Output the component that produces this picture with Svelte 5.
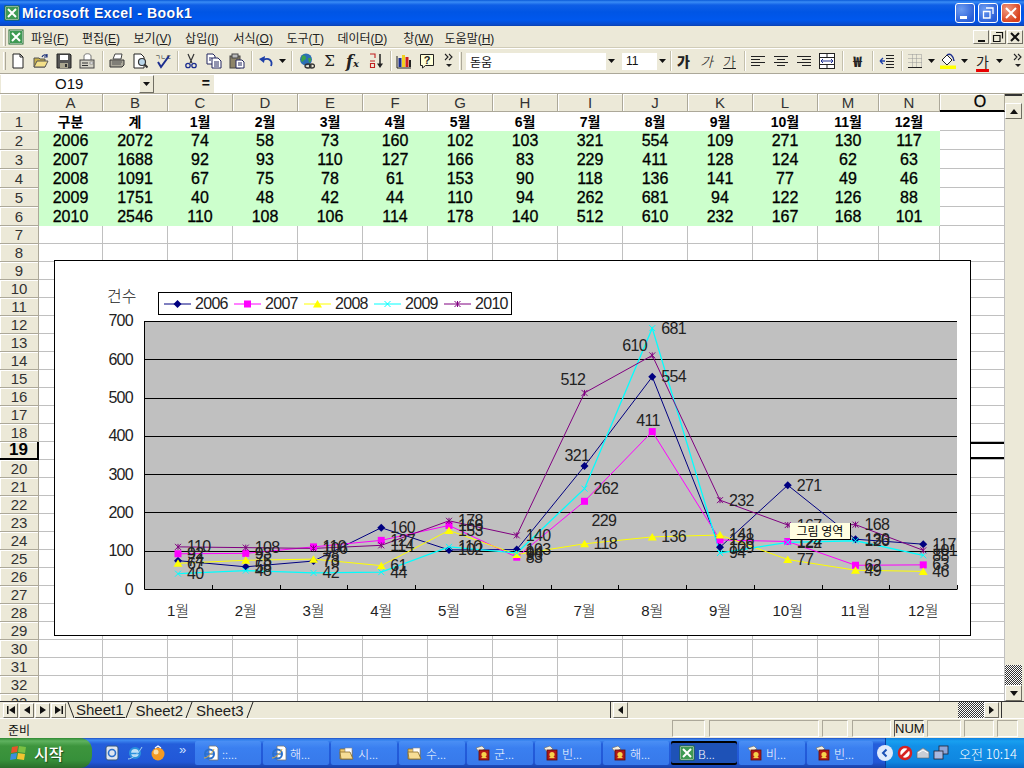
<script>
  const columns = ["A", "B", "C", "D", "E", "F", "G", "H", "I", "J", "K", "L", "M", "N", "O"];
  const months = ["1월", "2월", "3월", "4월", "5월", "6월", "7월", "8월", "9월", "10월", "11월", "12월"];

  const series = [
    { name: "2006", total: 2072, color: "#000080", mark: "diamond", values: [74, 58, 73, 160, 102, 103, 321, 554, 109, 271, 130, 117] },
    { name: "2007", total: 1688, color: "#ff00ff", mark: "square", values: [92, 93, 110, 127, 166, 83, 229, 411, 128, 124, 62, 63] },
    { name: "2008", total: 1091, color: "#ffff00", mark: "triangle", values: [67, 75, 78, 61, 153, 90, 118, 136, 141, 77, 49, 46] },
    { name: "2009", total: 1751, color: "#00ffff", mark: "cross", values: [40, 48, 42, 44, 110, 94, 262, 681, 94, 122, 126, 88] },
    { name: "2010", total: 2546, color: "#800080", mark: "star", values: [110, 108, 106, 114, 178, 140, 512, 610, 232, 167, 168, 101] },
  ];

  // labels someone dragged by hand in the chart
  const moved = {
    "2006-6": [-20, -11],
    "2007-6": [7, 19],
    "2007-7": [-16, -11],
    "2010-6": [-24, -13],
    "2010-7": [-30, -10],
  };

  const rows = [];
  for (let i = 1; i <= 33; i++) rows.push(i);

  const px = (i) => 178 + i * 67.75;
  const py = (v) => 589 - v * 0.383;
  const line = (s) => s.values.map((v, i) => `${px(i)},${py(v)}`).join(" ");
  const labelX = (s, i) => px(i) + (moved[`${s.name}-${i}`]?.[0] ?? 9);
  const labelY = (s, i) => py(s.values[i]) + (moved[`${s.name}-${i}`]?.[1] ?? 0);

  function cell(row, col) {
    if (row === 1) {
      if (col === 0) return "구분";
      if (col === 1) return "계";
      if (col < 14) return months[col - 2];
      return "";
    }
    if (row > 6 || col > 13) return "";
    const s = series[row - 2];
    if (col === 0) return s.name;
    if (col === 1) return s.total;
    return s.values[col - 2];
  }

  const tasks = [
    { icon: "ie", text: "::..." },
    { icon: "ie", text: "해..." },
    { icon: "folder", text: "시..." },
    { icon: "folder", text: "수..." },
    { icon: "hwp", text: "군..." },
    { icon: "hwp", text: "빈..." },
    { icon: "hwp", text: "해..." },
    { icon: "xl", text: "B...", active: true },
    { icon: "hwp", text: "비..." },
    { icon: "hwp", text: "빈..." },
  ];
</script>

{#snippet xlIcon()}
  <svg class="i16" viewBox="0 0 16 16">
    <rect x="1" y="1" width="14" height="14" fill="#fff" stroke="#1c6b2c" />
    <rect x="2" y="2" width="12" height="12" fill="#3e9a53" />
    <path d="M4 4l8 8M12 4l-8 8" stroke="#fff" stroke-width="2" />
  </svg>
{/snippet}

{#snippet hwpIcon()}
  <svg class="i16" viewBox="0 0 16 16">
    <path d="M1 3l6-2 3 3-6 3z" fill="#f4f0e0" stroke="#666" stroke-width=".6" />
    <rect x="4" y="5" width="10" height="10" fill="#b01818" stroke="#5a0c0c" stroke-width=".8" />
    <circle cx="9" cy="9.5" r="2.6" fill="#f6d24a" />
    <rect x="6.5" y="12" width="5" height="1.2" fill="#f6d24a" />
  </svg>
{/snippet}

{#snippet folderIcon()}
  <svg class="i16" viewBox="0 0 16 16">
    <path d="M1 4h5l1 1h6v9H1z" fill="#eecb72" stroke="#8a6d2a" stroke-width=".8" />
    <rect x="6" y="3" width="7" height="7" fill="#fff" stroke="#888" stroke-width=".6" />
    <path d="M1 7h10l3 7H2z" fill="#f6dd95" stroke="#8a6d2a" stroke-width=".8" />
  </svg>
{/snippet}

{#snippet ieIcon()}
  <svg class="i16" viewBox="0 0 16 16">
    <path d="M6 1h7l2 2v12H6z" fill="#fff" stroke="#777" stroke-width=".8" />
    <circle cx="6.5" cy="9" r="4.5" fill="none" stroke="#2a70cc" stroke-width="2" />
    <path d="M2.5 9h8" stroke="#2a70cc" stroke-width="1.4" />
    <path d="M1 13c3 0 8-4 10-9" fill="none" stroke="#e0b040" stroke-width="1" />
  </svg>
{/snippet}

{#snippet arrow()}
  <svg class="arr" viewBox="0 0 7 4"><path d="M0 0h7L3.5 4z" fill="#111" /></svg>
{/snippet}

{#snippet more()}
  <svg class="more" viewBox="0 0 10 16">
    <path d="M1 1l3 3-3 3M5 1l3 3-3 3" fill="none" stroke="#222" stroke-width="1.1" />
    <path d="M2 11h6l-3 3z" fill="#222" />
  </svg>
{/snippet}

{#snippet marker(kind, color, x, y)}
  {#if kind === "diamond"}
    <path d="M{x} {y - 4}l4 4-4 4-4-4z" fill={color} />
  {:else if kind === "square"}
    <rect x={x - 3.5} y={y - 3.5} width="7" height="7" fill={color} />
  {:else if kind === "triangle"}
    <path d="M{x} {y - 4}l4.500 7.500h-9z" fill={color} />
  {:else if kind === "cross"}
    <path d="M{x - 3} {y - 3}l6 6M{x + 3} {y - 3}l-6 6" stroke={color} fill="none" />
  {:else}
    <path d="M{x - 3} {y - 3}l6 6M{x + 3} {y - 3}l-6 6M{x} {y - 3}v6" stroke={color} fill="none" />
  {/if}
{/snippet}

<div class="window">
  <header class="title">
    {@render xlIcon()}
    <span class="caption">Microsoft Excel - Book1</span>
    <div class="winbtns">
      <button class="wb"><span class="min"></span></button>
      <button class="wb">
        <svg viewBox="0 0 14 14" class="i14"><path d="M5 2h7v6M2.500 5.500h6.500v6.500h-6.500z" fill="none" stroke="#fff" stroke-width="1.300" /></svg>
      </button>
      <button class="wb close">
        <svg viewBox="0 0 14 14" class="i14"><path d="M2 2l10 10M12 2l-10 10" stroke="#fff" stroke-width="2" /></svg>
      </button>
    </div>
  </header>

  <nav class="menu">
    <span class="grip"></span>
    <span class="doc">{@render xlIcon()}</span>
    <span class="mi m1">파일(<u>F</u>)</span>
    <span class="mi m1">편집(<u>E</u>)</span>
    <span class="mi m1">보기(<u>V</u>)</span>
    <span class="mi m2">삽입(<u>I</u>)</span>
    <span class="mi m1">서식(<u>O</u>)</span>
    <span class="mi m1">도구(<u>T</u>)</span>
    <span class="mi m3">데이터(<u>D</u>)</span>
    <span class="mi m4">창(<u>W</u>)</span>
    <span class="mi">도움말(<u>H</u>)</span>
    <div class="docbtns">
      <button class="db"><span class="dmin"></span></button>
      <button class="db">
        <svg viewBox="0 0 12 12" class="i12"><path d="M4 1.500h6.500v6M1.500 4.500h6.500v6h-6.500z" fill="none" stroke="#111" stroke-width="1.200" /></svg>
      </button>
      <button class="db">
        <svg viewBox="0 0 12 12" class="i12"><path d="M2 2l8 8M10 2l-8 8" stroke="#111" stroke-width="2" /></svg>
      </button>
    </div>
  </nav>

  <div class="toolbar">
    <span class="grip"></span>
    <span class="tb"><svg class="i16" viewBox="0 0 16 16"><path d="M3 1h7l3 3v11H3z" fill="#fff" stroke="#222" /><path d="M10 1v3h3" fill="none" stroke="#222" /></svg></span>
    <span class="tb"><svg class="i16" viewBox="0 0 16 16"><path d="M1 5h5l1 1h5v8H1z" fill="#c9b04a" stroke="#555" /><path d="M1 14l3-6h11l-3 6z" fill="#f3e08a" stroke="#555" /><path d="M9 4c1-2 3-3 5-1M14 1v3h-3" fill="none" stroke="#1b2f7a" stroke-width="1.200" /></svg></span>
    <span class="tb"><svg class="i16" viewBox="0 0 16 16"><path d="M1 1h13l1 1v13H1z" fill="#555" stroke="#222" /><rect x="4" y="2" width="8" height="5" fill="#fff" /><rect x="4" y="10" width="8" height="5" fill="#a9a58f" /><rect x="9" y="11" width="2" height="3" fill="#333" /></svg></span>
    <span class="tb"><svg class="i16" viewBox="0 0 16 16"><path d="M5 7V3c0-3 7-3 7 0v4" fill="#fff" stroke="#777" /><rect x="1" y="7" width="14" height="8" fill="#d4d2c6" stroke="#444" /><path d="M3 10h6M3 12.500h6" stroke="#333" /><rect x="11" y="9" width="3" height="2" fill="#fff" stroke="#555" stroke-width=".5" /></svg></span>
    <span class="sep s7"></span>
    <span class="tb"><svg class="i16" viewBox="0 0 16 16"><path d="M4 6l2-5h7l-1 5z" fill="#fff" stroke="#444" /><path d="M1 7h14v5l-2 2H1z" fill="#aaa79a" stroke="#333" /><path d="M3 9h10M3 11h9" stroke="#555" /></svg></span>
    <span class="tb"><svg class="i16" viewBox="0 0 16 16"><path d="M2 1h7l3 3v11H2z" fill="#fff" stroke="#222" /><circle cx="10" cy="9" r="3.500" fill="#b9d6ea" stroke="#333" stroke-width="1.200" /><path d="M12.500 11.500l3 3" stroke="#333" stroke-width="2" /></svg></span>
    <span class="tb"><svg class="i16" viewBox="0 0 16 16"><text x="0" y="6" class="tiny">ㄱㄴㄷ</text><path d="M3 9l3 5 8-11" fill="none" stroke="#1d2f8f" stroke-width="2" /></svg></span>
    <span class="sep s5"></span>
    <span class="tb"><svg class="i16" viewBox="0 0 16 16"><path d="M5 1l4 9M11 1l-4 9" stroke="#333" stroke-width="1.200" /><circle cx="5" cy="12.500" r="2.200" fill="none" stroke="#1d2f8f" stroke-width="1.300" /><circle cx="11" cy="12.500" r="2.200" fill="none" stroke="#1d2f8f" stroke-width="1.300" /></svg></span>
    <span class="tb"><svg class="i16" viewBox="0 0 16 16"><path d="M1 1h6l2 2v8H1z" fill="#fff" stroke="#23265e" /><path d="M6 5h6l3 3v7H6z" fill="#fff" stroke="#23265e" /><path d="M3 5h3M3 7h2M8 9h5M8 11h5M8 13h5" stroke="#23265e" /></svg></span>
    <span class="tb"><svg class="i16" viewBox="0 0 16 16"><rect x="1" y="3" width="10" height="12" fill="#8d8468" stroke="#444" /><rect x="3" y="1" width="6" height="4" fill="#bbb" stroke="#444" /><path d="M7 7h6l2 2v6H7z" fill="#fff" stroke="#23265e" /><path d="M9 10h4M9 12h4" stroke="#23265e" /></svg></span>
    <span class="sep s6"></span>
    <span class="tb"><svg class="i16" viewBox="0 0 16 16"><path d="M13 13c2-5-2-9-8-6" fill="none" stroke="#1d3fa8" stroke-width="1.800" /><path d="M1 6l6-3-1 7z" fill="#1d3fa8" /></svg></span>
    <span class="ar">{@render arrow()}</span>
    <span class="sep s8"></span>
    <span class="tb"><svg class="i16" viewBox="0 0 16 16"><circle cx="7" cy="6.500" r="6" fill="#2b6fb5" /><path d="M3 3c2-2 4 0 4 2s-3 2-3 4l-2-1zM9 5l3 0 0 3-2 2z" fill="#3aa24a" /><ellipse cx="9" cy="13" rx="3" ry="2" fill="none" stroke="#333" stroke-width="1.300" /><ellipse cx="13" cy="13" rx="2.500" ry="2" fill="none" stroke="#333" stroke-width="1.300" /></svg></span>
    <span class="tb glyph sigma">Σ</span>
    <span class="tb glyph fx"><i>f</i><small><i>x</i></small></span>
    <span class="tb"><svg class="i16" viewBox="0 0 16 16"><path d="M2 1h5v4M2 8h5M2.500 10.500h4v4h-4z" fill="none" stroke="#c02020" stroke-width="1.100" /><path d="M12 1v12" stroke="#222" stroke-width="1.500" /><path d="M9 10.500h6L12 15z" fill="#222" /></svg></span>
    <span class="sep s5"></span>
    <span class="tb"><svg class="i16" viewBox="0 0 16 16"><path d="M1 3v12h14" fill="none" stroke="#222" /><rect x="2.500" y="5" width="3" height="9" fill="#1d2f8f" /><rect x="6" y="2" width="3" height="12" fill="#f0d020" /><rect x="9.500" y="4" width="3" height="10" fill="#d02020" /><rect x="13" y="7" width="2" height="7" fill="#222" /></svg></span>
    <span class="tb"><svg class="i16" viewBox="0 0 16 16"><path d="M1.500 1.500h13v11h-8l-3 2.500v-2.500h-2z" fill="#ffffd8" stroke="#222" /><text x="8" y="11" class="qmark">?</text></svg></span>
    <span class="ar chev">{@render more()}</span>
    <span class="grip g2"></span>
    <div class="combo font"><span>돋움</span><b>{@render arrow()}</b></div>
    <div class="combo size"><span>11</span><b>{@render arrow()}</b></div>
    <span class="sep s4"></span>
    <span class="tb kor bold">가</span>
    <span class="tb kor ital">가</span>
    <span class="tb kor under">가</span>
    <span class="sep s5"></span>
    <span class="tb"><svg class="i16" viewBox="0 0 16 16"><path d="M1 3.500h14M1 6.500h9M1 9.500h14M1 12.500h9" stroke="#222" /></svg></span>
    <span class="tb"><svg class="i16" viewBox="0 0 16 16"><path d="M1 3.500h14M4 6.500h8M1 9.500h14M4 12.500h8" stroke="#222" /></svg></span>
    <span class="tb"><svg class="i16" viewBox="0 0 16 16"><path d="M1 3.500h14M6 6.500h9M1 9.500h14M6 12.500h9" stroke="#222" /></svg></span>
    <span class="tb"><svg class="i16" viewBox="0 0 16 16"><rect x=".5" y=".5" width="15" height="15" fill="#fff" stroke="#222" /><path d="M.5 4.500h15M.5 11.500h15M8 .5v4M8 11.500v4" stroke="#222" /><path d="M2 8h12M2 8l2-2M2 8l2 2M14 8l-2-2M14 8l-2 2" fill="none" stroke="#1d2f8f" /></svg></span>
    <span class="sep s8"></span>
    <span class="tb kor won">₩</span>
    <span class="sep s6"></span>
    <span class="tb"><svg class="i16" viewBox="0 0 16 16"><path d="M7 2.500h8M7 5.500h8M7 8.500h8M7 11.500h8M7 14.500h8" stroke="#222" /><path d="M1 8h5M1 8l3-3M1 8l3 3" fill="none" stroke="#1d3fa8" stroke-width="1.300" /></svg></span>
    <span class="sep s5"></span>
    <span class="tb"><svg class="i16" viewBox="0 0 16 16"><path d="M1.500 1.500h13v13h-13M1.500 5.500h13M1.500 9.500h13M5.500 1.500v13M9.500 1.500v13" fill="none" stroke="#999" stroke-dasharray="1 1" /><path d="M1 14.500h14" stroke="#222" /></svg></span>
    <span class="ar">{@render arrow()}</span>
    <span class="tb"><svg class="i16" viewBox="0 0 16 16"><path d="M2 7l5-5 5 5-5 5z" fill="#fff" stroke="#222" /><path d="M7 2c3-2 6 0 7 6" fill="none" stroke="#1d2f8f" stroke-width="1.500" /><rect y="12.500" width="16" height="3.500" fill="#ffff00" /></svg></span>
    <span class="ar">{@render arrow()}</span>
    <span class="tb kor color">가</span>
    <span class="ar">{@render arrow()}</span>
    <span class="ar chev c2">{@render more()}</span>
  </div>

  <div class="formula">
    <div class="namebox"><span>O19</span><b>{@render arrow()}</b></div>
    <div class="eq">=</div>
    <div class="fx-input"></div>
  </div>

  <div class="body">
    <div class="sheet">
      <div class="grid">
        <div class="hd corner"></div>
        {#each columns as c}
          <div class="hd" class:sel-col={c === "O"}>{c}</div>
        {/each}
        {#each rows as r}
          <div class="hd" class:sel-row={r === 19}>{r}</div>
          {#each columns as c, i}
            <div class="cell" class:head={r === 1 && i < 14} class:green={r > 1 && r < 7 && i < 14} class:active={r === 19 && c === "O"}>{cell(r, i)}</div>
          {/each}
        {/each}
      </div>

      <div class="chart">
        <svg viewBox="54 260 917 376" width="917" height="376">
          <rect x="54.5" y="260.5" width="916" height="375" fill="#fff" stroke="#000" />
          <text x="107" y="302" class="ytitle">건수</text>

          <rect x="144" y="321" width="813" height="268" fill="#c0c0c0" />
          {#each [100, 200, 300, 400, 500, 600, 700] as g}
            <line x1="144" x2="957" y1={Math.round(py(g)) + 0.5} y2={Math.round(py(g)) + 0.5} stroke="#000" />
          {/each}
          <path d="M144.500 321v268.500h813" fill="none" stroke="#000" />
          {#each months as _, i}
            <line x1={Math.round(144 + (i + 1) * 67.75) + 0.5} x2={Math.round(144 + (i + 1) * 67.75) + 0.5} y1="585" y2="589" stroke="#000" />
          {/each}
          {#each [0, 100, 200, 300, 400, 500, 600, 700] as t}
            <text x="133" y={py(t)} class="lb" text-anchor="end" dominant-baseline="central">{t}</text>
          {/each}
          {#each months as m, i}
            <text x={px(i)} y="616" class="cat" text-anchor="middle">{m}</text>
          {/each}

          {#each series as s}
            <polyline points={line(s)} fill="none" stroke={s.color} stroke-width={s.mark === "cross" ? 1.3 : 1} />
          {/each}
          {#each series as s}
            {#each s.values as v, i}
              {@render marker(s.mark, s.color, px(i), py(v))}
            {/each}
          {/each}
          {#each series as s}
            {#each s.values as v, i}
              <text x={labelX(s, i)} y={labelY(s, i)} class="lb" dominant-baseline="central">{v}</text>
            {/each}
          {/each}

          <rect x="158.5" y="292.5" width="353" height="22" fill="#fff" stroke="#000" />
          {#each series as s, i}
            <line x1={164 + i * 70} x2={191 + i * 70} y1="304" y2="304" stroke={s.color} />
            {@render marker(s.mark, s.color, 177.5 + i * 70, 304)}
            <text x={195 + i * 70} y="303" class="lb" dominant-baseline="central">{s.name}</text>
          {/each}
        </svg>
      </div>

      <div class="tip">그림 영역</div>
    </div>

    <aside class="vscroll">
      <span class="split"></span>
      <button class="sb"><svg class="tri" viewBox="0 0 8 5"><path d="M0 5h8L4 0z" fill="#111" /></svg></button>
      <div class="track"><span class="thumb"></span></div>
      <button class="sb"><svg class="tri" viewBox="0 0 8 5"><path d="M0 0h8L4 5z" fill="#111" /></svg></button>
    </aside>
  </div>

  <div class="tabs">
    <div class="nav">
      <button class="nb"><svg viewBox="0 0 10 10" class="i10"><path d="M1 1h1.500v8H1zM9 1v8L3 5z" fill="#111" /></svg></button>
      <button class="nb"><svg viewBox="0 0 10 10" class="i10"><path d="M8 1v8L2 5z" fill="#111" /></svg></button>
      <button class="nb"><svg viewBox="0 0 10 10" class="i10"><path d="M2 1v8l6-4z" fill="#111" /></svg></button>
      <button class="nb"><svg viewBox="0 0 10 10" class="i10"><path d="M1 1v8l6-4zM7.500 1H9v8H7.500z" fill="#111" /></svg></button>
    </div>
    <svg class="slant" viewBox="0 0 8 16"><path d="M1 0l6 16" stroke="#222" /></svg>
    <span class="tab on">Sheet1</span>
    <svg class="slant" viewBox="0 0 8 16"><path d="M7 0l-6 16" stroke="#222" /></svg>
    <span class="tab">Sheet2</span>
    <svg class="slant" viewBox="0 0 8 16"><path d="M7 0l-6 16" stroke="#222" /></svg>
    <span class="tab">Sheet3</span>
    <svg class="slant" viewBox="0 0 8 16"><path d="M7 0l-6 16" stroke="#222" /></svg>
    <div class="hscroll">
      <span class="hsplit"></span>
      <button class="sb h"><svg class="tri v" viewBox="0 0 5 8"><path d="M5 0v8L0 4z" fill="#111" /></svg></button>
      <div class="htrack"><span class="hthumb"></span></div>
      <button class="sb h"><svg class="tri v" viewBox="0 0 5 8"><path d="M0 0v8l5-4z" fill="#111" /></svg></button>
      <span class="hsplit end"></span>
    </div>
  </div>

  <footer class="status">
    <span class="ready">준비</span>
    <div class="panels">
      <span class="p w33"></span>
      <span class="p w110"></span>
      <span class="p w25"></span>
      <span class="p w38"></span>
      <span class="p w30 num">NUM</span>
      <span class="p w34"></span>
      <span class="p w30"></span>
      <span class="p w21"></span>
    </div>
  </footer>

  <div class="taskbar">
    <button class="start">
      <svg class="flag" viewBox="0 0 18 18">
        <path d="M2 3l6-1 -1 6-6 1z" fill="#e8542a" />
        <path d="M9 2l7 1-1 6-7-1z" fill="#7bc043" />
        <path d="M1 10l6-1-1 6-6 1z" fill="#3b8ee0" />
        <path d="M8 9l7 1-1 6-7-1z" fill="#f2c530" />
      </svg>
      <span>시작</span>
    </button>
    <div class="quick">
      <svg class="i16" viewBox="0 0 16 16"><rect x="2" y="1" width="12" height="14" rx="2" fill="#dfe6ef" stroke="#33567f" /><circle cx="8" cy="8" r="3.500" fill="none" stroke="#2a70cc" stroke-width="1.600" /></svg>
      <svg class="i16" viewBox="0 0 16 16"><circle cx="8" cy="8" r="5" fill="#bfe0f7" stroke="#2a90dd" stroke-width="2.200" /><path d="M3 8.500h10" stroke="#2a90dd" stroke-width="1.500" /><path d="M1 14c4 0 11-6 14-12" fill="none" stroke="#a8d4f0" /></svg>
      <svg class="i16" viewBox="0 0 16 16"><circle cx="8" cy="9" r="6.500" fill="#f59a23" /><circle cx="6" cy="7" r="2.500" fill="#fde0a8" /><path d="M5 3l3-2 3 2" fill="none" stroke="#fff" stroke-width="1.300" /></svg>
      <span class="dbl">»</span>
    </div>
    <div class="tasks">
      {#each tasks as t}
        <button class="task" class:active={t.active}>
          {#if t.icon === "ie"}{@render ieIcon()}
          {:else if t.icon === "folder"}{@render folderIcon()}
          {:else if t.icon === "xl"}{@render xlIcon()}
          {:else}{@render hwpIcon()}{/if}
          <span>{t.text}</span>
        </button>
      {/each}
    </div>
    <div class="tray">
      <span class="tray-back"><svg viewBox="0 0 10 10" class="i10"><path d="M6.500 1.500L3 5l3.500 3.500" fill="none" stroke="#1a4fb5" stroke-width="2" /></svg></span>
      <svg class="i16" viewBox="0 0 16 16"><circle cx="8" cy="8" r="6" fill="#fff" stroke="#d62222" stroke-width="2.500" /><path d="M4 12l8-8" stroke="#d62222" stroke-width="2.500" /></svg>
      <svg class="i16" viewBox="0 0 16 16"><path d="M2 7l6-4 6 4v6H2z" fill="#c9ced6" stroke="#666" stroke-width=".6" /><path d="M3 8l5-3 5 3" fill="none" stroke="#fff" /></svg>
      <svg class="i16" viewBox="0 0 16 16"><rect x="6" y="1" width="9" height="8" fill="#8da6d8" stroke="#223" stroke-width=".8" /><rect x="1" y="6" width="9" height="8" fill="#a8b8e0" stroke="#223" stroke-width=".8" /></svg>
      <span class="clock">오전 10:14</span>
    </div>
  </div>
</div>

<style>
  :global(body) {
    margin: 0;
    background: #ece9d8;
  }
  button {
    padding: 0;
    margin: 0;
    font: inherit;
    color: inherit;
  }
  .window {
    width: 1024px;
    height: 768px;
    display: flex;
    flex-direction: column;
    overflow: hidden;
    position: relative;
    font-family: "Liberation Sans", "Noto Sans CJK KR", sans-serif;
    color: #111;
    background: #ece9d8;
  }
  .i16 { width: 16px; height: 16px; flex: none; display: block; }
  .i14 { width: 14px; height: 14px; display: block; }
  .i12 { width: 12px; height: 12px; display: block; }
  .i10 { width: 10px; height: 10px; display: block; }

  /* title bar */
  .title {
    height: 26px;
    flex: none;
    display: flex;
    align-items: center;
    padding-left: 4px;
    background: linear-gradient(#0a5ad8 0, #3a8cf5 2px, #0f5fe6 5px, #0055e5 12px, #0058ee 20px, #0a49c8 25px, #0a3ea8 26px);
    color: #fff;
  }
  .caption {
    margin-left: 2px;
    font-size: 14px;
    font-weight: bold;
    letter-spacing: .5px;
    text-shadow: 1px 1px 0 #0f3a9c;
  }
  .winbtns {
    margin-left: auto;
    margin-right: 3px;
    display: flex;
    gap: 3px;
  }
  .wb {
    width: 20px;
    height: 20px;
    border: 1px solid #fff;
    border-radius: 3px;
    background: radial-gradient(circle at 30% 30%, #6d9cf0, #2a5fd8 75%);
    display: flex;
    align-items: center;
    justify-content: center;
  }
  .wb.close { background: radial-gradient(circle at 30% 30%, #f09a80, #d8401c 75%); }
  .min {
    width: 7px;
    height: 3px;
    background: #fff;
    margin-top: 8px;
    margin-right: 4px;
  }

  /* menu */
  .menu {
    height: 23px;
    flex: none;
    display: flex;
    align-items: center;
    padding-left: 2px;
    font-size: 12px;
    border-bottom: 1px solid #fff;
    box-sizing: border-box;
    box-shadow: inset 0 -1px 0 #d0ccb8;
  }
  .grip {
    width: 3px;
    height: 18px;
    flex: none;
    margin-left: 1px;
    border-left: 1px solid #fff;
    border-right: 1px solid #aca899;
    box-sizing: border-box;
  }
  .doc { margin: 0 7px 0 2px; }
  .mi { color: #222; white-space: nowrap; }
  .m1 { margin-right: 13.5px; }
  .m2 { margin-right: 15px; }
  .m3 { margin-right: 16px; }
  .m4 { margin-right: 11px; }
  .docbtns {
    margin-left: auto;
    margin-right: 1px;
    display: flex;
    gap: 1px;
  }
  .db {
    width: 16px;
    height: 14px;
    border: 1px solid;
    border-color: #fff #716f64 #716f64 #fff;
    background: #ece9d8;
    display: flex;
    align-items: center;
    justify-content: center;
    box-sizing: border-box;
  }
  .dmin { width: 7px; height: 2px; background: #111; margin-top: 7px; }

  /* toolbar */
  .toolbar {
    height: 25px;
    flex: none;
    display: flex;
    align-items: center;
    padding-left: 2px;
    box-sizing: border-box;
    border-bottom: 1px solid #aca899;
  }
  .g2 { margin: 0 4px 0 3px; }
  .tb {
    width: 23px;
    height: 22px;
    flex: none;
    display: flex;
    align-items: center;
    justify-content: center;
  }
  .ar {
    width: 10px;
    flex: none;
    display: flex;
    justify-content: center;
  }
  .arr { width: 7px; height: 4px; display: block; }
  .chev { width: 14px; margin-left: 4px; }
  .c2 { margin-left: 7px; }
  .more { width: 10px; height: 16px; display: block; }
  .sep {
    flex: none;
    height: 20px;
    box-sizing: border-box;
    position: relative;
  }
  .sep::after {
    content: "";
    position: absolute;
    left: 50%;
    top: 0;
    bottom: 0;
    border-left: 1px solid #c4c0ac;
    border-right: 1px solid #fff;
  }
  .s4 { width: 4px; }
  .s5 { width: 5px; }
  .s6 { width: 6px; }
  .s7 { width: 7px; }
  .s8 { width: 8px; }
  .tiny { font-size: 6px; fill: #222; font-family: "Noto Sans CJK KR", sans-serif; }
  .qmark { font-size: 11px; font-weight: bold; fill: #222; text-anchor: middle; }
  .glyph { font-family: "DejaVu Serif", serif; color: #222; }
  .sigma { font-size: 15px; }
  .fx { font-size: 16px; font-weight: bold; }
  .fx small { font-size: 10px; margin-top: 4px; }
  .kor { font-family: "Noto Sans CJK KR", sans-serif; font-size: 14px; color: #222; }
  .bold { font-weight: 900; }
  .ital { font-style: italic; font-weight: 300; }
  .under { text-decoration: underline; font-weight: 300; }
  .won { font-weight: 900; }
  .color {
    margin-left: 2px;
    text-decoration: underline solid #e80000 3px;
    text-underline-offset: 2px;
    text-decoration-skip-ink: none;
  }
  .combo {
    height: 17px;
    display: flex;
    align-items: center;
    background: #fff;
    font-size: 12px;
    flex: none;
    box-sizing: border-box;
    padding-left: 4px;
    justify-content: space-between;
  }
  .combo b {
    width: 11px;
    height: 17px;
    background: #ece9d8;
    display: flex;
    align-items: center;
    justify-content: center;
  }
  .font { width: 151px; margin-right: 5px; }
  .size { width: 46px; font-family: "Liberation Sans", sans-serif; }

  /* formula bar */
  .formula {
    height: 20px;
    flex: none;
    display: flex;
    font-size: 15px;
    box-sizing: border-box;
    border-bottom: 1px solid #aca899;
    border-top: 1px solid #fff;
  }
  .namebox {
    width: 153px;
    margin-left: 1px;
    background: #fff;
    display: flex;
    justify-content: space-between;
    flex: none;
    box-sizing: border-box;
    padding-left: 54px;
  }
  .namebox b {
    width: 15px;
    display: flex;
    align-items: center;
    justify-content: center;
    background: #ece9d8;
    border: 1px solid;
    border-color: #fff #716f64 #716f64 #fff;
    box-sizing: border-box;
  }
  .eq {
    width: 60px;
    flex: none;
    box-sizing: border-box;
    padding-right: 4px;
    text-align: right;
    font-weight: bold;
    font-size: 14px;
  }
  .fx-input { flex: 1; background: #fff; }

  /* sheet */
  .body {
    flex: 1;
    min-height: 0;
    display: flex;
  }
  .sheet {
    width: 1005px;
    flex: none;
    position: relative;
    overflow: hidden;
    background: #fff;
  }
  .grid {
    display: grid;
    grid-template-columns: 39px 64px repeat(11, 65px) 61px 61px 65px;
    grid-template-rows: 18px repeat(6, 19px) repeat(27, 18px);
    font-size: 15px;
  }
  .hd {
    background: #ece9d8;
    border-right: 1px solid #aca899;
    border-bottom: 1px solid #aca899;
    box-shadow: inset 1px 1px 0 #fff;
    box-sizing: border-box;
    display: flex;
    align-items: center;
    justify-content: center;
    color: #333;
    font-size: 15px;
  }
  .sel-col {
    font-size: 16px;
    padding-left: 16px;
    border-bottom: 2px solid #000;
    color: #000;
    -webkit-text-stroke: .3px #000;
  }
  .sel-row {
    font-weight: bold;
    font-size: 17px;
    border-right: 2px solid #000;
    border-bottom: 2px solid #000;
    color: #000;
  }
  .cell {
    border-right: 1px solid #c0c0c0;
    border-bottom: 1px solid #c0c0c0;
    box-sizing: border-box;
    display: flex;
    align-items: center;
    justify-content: center;
    font-size: 16px;
    color: #000;
  }
  .head {
    border-color: transparent;
    font-weight: bold;
    font-size: 14px;
  }
  .green {
    background: #ccffcc;
    border-color: #ccffcc;
    padding-top: 2px;
    -webkit-text-stroke: .3px #000;
  }
  .active { box-shadow: inset 0 2px 0 #000, inset 0 -2px 0 #000; }

  .chart {
    position: absolute;
    left: 54px;
    top: 166px;
    width: 917px;
    height: 376px;
    line-height: 0;
  }
  .lb {
    font-size: 16px;
    letter-spacing: -.7px;
    fill: #222;
    font-family: "Liberation Sans", sans-serif;
  }
  .cat, .ytitle {
    fill: #222;
    font-weight: 300;
    font-family: "Liberation Sans", "Noto Sans CJK KR", sans-serif;
  }
  .cat { font-size: 15px; }
  .ytitle { font-size: 16px; }
  .tip {
    position: absolute;
    left: 790px;
    top: 429px;
    width: 60px;
    height: 16px;
    background: #ffffe1;
    border-right: 1px solid #000;
    border-bottom: 1px solid #000;
    font-size: 12px;
    line-height: 16px;
    text-align: center;
    color: #000;
    font-family: "Noto Sans CJK KR", sans-serif;
  }

  /* scrollbars */
  .vscroll {
    width: 17px;
    flex: none;
    margin-right: 2px;
    display: flex;
    flex-direction: column;
  }
  .split {
    height: 9px;
    flex: none;
    border-top: 2px solid #333;
    box-sizing: border-box;
  }
  .sb {
    width: 17px;
    height: 16px;
    flex: none;
    background: #ece9d8;
    border: 1px solid;
    border-color: #fff #716f64 #716f64 #fff;
    box-sizing: border-box;
    display: flex;
    align-items: center;
    justify-content: center;
  }
  .sb.h { width: 15px; height: 16px; }
  .tri { width: 8px; height: 5px; display: block; }
  .tri.v { width: 5px; height: 8px; }
  .track {
    flex: 1;
    display: flex;
    flex-direction: column;
    justify-content: flex-end;
  }
  .thumb, .hthumb {
    display: block;
    background-color: #fff;
    background-image: conic-gradient(#333 25%, #fff 0 50%, #333 0 75%, #fff 0);
    background-size: 2px 2px;
  }
  .thumb { height: 20px; }

  /* tabs */
  .tabs {
    height: 17px;
    flex: none;
    display: flex;
    align-items: center;
    border-top: 1px solid #333;
    box-sizing: border-box;
    font-size: 15px;
  }
  .nav {
    display: flex;
    margin-left: 3px;
    gap: 1px;
    width: 64px;
    flex: none;
  }
  .nb {
    width: 15px;
    height: 15px;
    background: #ece9d8;
    border: 1px solid;
    border-color: #fff #716f64 #716f64 #fff;
    box-sizing: border-box;
    display: flex;
    align-items: center;
    justify-content: center;
  }
  .slant { width: 8px; height: 16px; flex: none; }
  .tab { padding: 0 2px 0 3px; white-space: nowrap; color: #222; }
  .tab.on { border-bottom: 1px solid #222; line-height: 15px; padding: 0 1px; }
  .hscroll {
    margin-left: auto;
    width: 414px;
    display: flex;
    align-items: stretch;
    height: 16px;
    flex: none;
  }
  .hsplit {
    width: 2px;
    border-left: 1px solid #333;
    flex: none;
  }
  .hsplit.end { margin-left: 2px; margin-right: 20px; }
  .htrack {
    flex: 1;
    display: flex;
    justify-content: flex-end;
  }
  .hthumb { width: 26px; }

  /* status */
  .status {
    height: 20px;
    flex: none;
    display: flex;
    align-items: center;
    border-top: 1px solid #fff;
    box-sizing: border-box;
    font-size: 12px;
    padding-left: 8px;
    font-family: "Noto Sans CJK KR", sans-serif;
  }
  .ready { margin-top: 1px; }
  .panels {
    margin-left: auto;
    margin-right: 6px;
    display: flex;
    gap: 3px;
    height: 17px;
  }
  .p {
    box-sizing: border-box;
    border: 1px solid;
    border-color: #aca899 #fff #fff #aca899;
    font-family: "Liberation Sans", sans-serif;
    font-size: 13px;
    line-height: 15px;
    text-align: center;
  }
  .w33 { width: 33px; margin-right: 1px; }
  .w110 { width: 110px; }
  .w25 { width: 26px; margin-right: 1px; }
  .w38 { width: 39px; }
  .w30 { width: 30px; }
  .w34 { width: 34px; }
  .w21 { width: 21px; }
  .num { border-color: #555 #fff #fff #555; }

  /* taskbar */
  .taskbar {
    height: 30px;
    flex: none;
    display: flex;
    align-items: center;
    background: linear-gradient(#1f4fc4 0, #3f8cf3 2px, #245edb 6px, #2157d7 24px, #1941a5 30px);
    color: #fff;
  }
  .start {
    width: 92px;
    height: 30px;
    flex: none;
    border: 0;
    border-radius: 0 12px 12px 0;
    background: linear-gradient(#2f8a33 0, #5fb25f 3px, #3d953d 8px, #37903a 22px, #2a6e2a 30px);
    display: flex;
    align-items: center;
    padding-left: 10px;
    gap: 6px;
    color: #fff;
    font-size: 16px;
    font-weight: 500;
    box-sizing: border-box;
    font-family: "Noto Sans CJK KR", sans-serif;
    text-shadow: 1px 1px 1px #1c4a1c;
  }
  .flag { width: 18px; height: 18px; }
  .quick {
    margin-left: 12px;
    width: 91px;
    flex: none;
    display: flex;
    align-items: center;
    gap: 7px;
    box-sizing: border-box;
  }
  .dbl { margin-left: 6px; font-size: 13px; margin-top: -8px; color: #cfe0ff; }
  .tasks {
    display: flex;
    gap: 2px;
    flex: none;
  }
  .task {
    width: 66px;
    height: 24px;
    border: 0;
    border-radius: 2px;
    background: linear-gradient(#4a8ff5, #3a7ff0 30%, #3779ea);
    display: flex;
    align-items: center;
    gap: 3px;
    padding-left: 8px;
    box-sizing: border-box;
    color: #fff;
    font-size: 12px;
    font-family: "Noto Sans CJK KR", sans-serif;
    font-weight: 300;
  }
  .task.active { background: #1e52b7; }
  .tray {
    position: absolute;
    right: 0;
    bottom: 0;
    width: 139px;
    height: 30px;
    box-sizing: border-box;
    background: linear-gradient(#0e7fe0 0, #18a0f0 3px, #1290e8 8px, #0f86e0 24px, #0a66c4 30px);
    border-left: 1px solid #0a3e9c;
    display: flex;
    align-items: center;
    gap: 2px;
    color: #fff;
  }
  .tray-back {
    width: 16px;
    height: 16px;
    margin: 0 2px 0 -9px;
    border-radius: 50%;
    background: #dfeafc;
    display: flex;
    align-items: center;
    justify-content: center;
    flex: none;
  }
  .clock {
    margin-left: 8px;
    font-size: 13px;
    font-family: "Noto Sans CJK KR", sans-serif;
    white-space: nowrap;
    font-weight: 300;
  }
</style>
